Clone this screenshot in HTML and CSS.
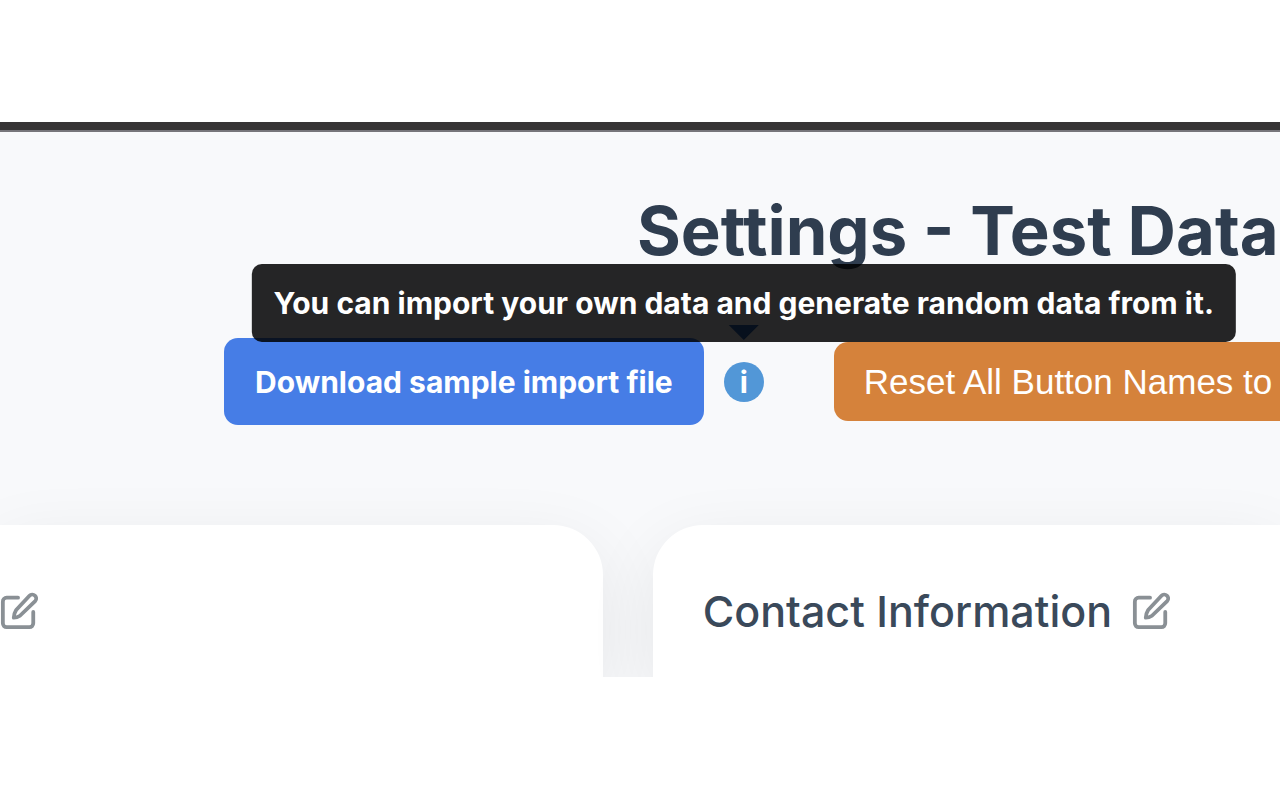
FILE: index.html
```
<!DOCTYPE html>
<html lang="en">
<head>
    <meta charset="UTF-8">
    <meta name="viewport" content="width=device-width, initial-scale=1.0">
    <title>Settings - Test Data</title>
    <link rel="stylesheet" href="styles.css">
</head>
<body>

    <main class="settings">
        <h1 class="title">Settings - Test Data</h1>

        <div class="toolbar">
            <button class="button button-download" type="button">Download sample import file</button>
            <button class="info" type="button" aria-describedby="import-tip">
                i
                <span class="tooltip" id="import-tip" role="tooltip">You can import your own data and generate random data from it.</span>
            </button>
            <button class="button button-reset" type="button">Reset All Button Names to</button>
        </div>

        <div class="cards">
            <section class="card card-left">
                <button class="edit" type="button" aria-label="Edit section name">
                    <svg viewBox="0 0 40 40" aria-hidden="true">
                        <path d="M19 6H7a4 4 0 0 0-4 4v23a4 4 0 0 0 4 4h24a4 4 0 0 0 4-4V21"/>
                        <path d="M31 4a3.800 3.800 0 0 1 6 5.500L21 25q-3 2-6.500 2q0-4 2.500-8z"/>
                    </svg>
                </button>
            </section>
            <section class="card card-right">
                <h2 class="card-title">Contact Information</h2>
                <button class="edit" type="button" aria-label="Edit Contact Information">
                    <svg viewBox="0 0 40 40" aria-hidden="true">
                        <path d="M19 6H7a4 4 0 0 0-4 4v23a4 4 0 0 0 4 4h24a4 4 0 0 0 4-4V21"/>
                        <path d="M31 4a3.800 3.800 0 0 1 6 5.500L21 25q-3 2-6.500 2q0-4 2.500-8z"/>
                    </svg>
                </button>
            </section>
        </div>
    </main>

</body>
</html>
```
FILE: styles.css
```
* {
    box-sizing: border-box;
}

body {
    margin: 0;
    padding: 122px 0;
    background: #fff;
    color: #2f3d4f;
    font-family: Inter, "Liberation Sans", sans-serif;
}

.settings {
    overflow: hidden;
    border-top: 8px solid #363435;
    background: linear-gradient(#77767b 2px, #f8f9fb 2px);
}

.title {
    margin: 0;
    padding: 61px 0 0 637px;
    font-size: 67px;
    font-weight: 700;
    line-height: 80px;
    white-space: nowrap;
}

.toolbar {
    display: flex;
    align-items: center;
    margin: 67px 0 100px 224px;
    white-space: nowrap;
}

.button {
    flex-shrink: 0;
    border: none;
    border-radius: 14px;
    color: #fff;
    cursor: pointer;
}

.button-download {
    padding: 25px 31px 23px;
    background: #467de6;
    font: 700 30px/39px Inter, sans-serif;
}

.button-reset {
    margin-left: 70px;
    padding: 20px 30px;
    background: #d5823b;
    font: 35px/39px "Liberation Sans", sans-serif;
}

.info {
    position: relative;
    flex-shrink: 0;
    width: 40px;
    height: 40px;
    margin-left: 20px;
    padding: 0;
    border: none;
    border-radius: 50%;
    background: #5297d7;
    color: #fff;
    font: 700 30px/40px Inter, sans-serif;
}

.tooltip {
    position: absolute;
    z-index: 1;
    bottom: 60px;
    left: 50%;
    transform: translateX(-50%);
    padding: 20px 22px;
    border-radius: 10px;
    background: rgba(0, 0, 0, 0.85);
    line-height: 38px;
}

.tooltip::after {
    content: "";
    position: absolute;
    bottom: 2px;
    left: 50%;
    margin-left: -15px;
    border: 15px solid transparent;
    border-top-color: #07101d;
    border-bottom: 0;
}

.cards {
    display: grid;
    grid-template-columns: 49fr 51fr;
    gap: 50px;
}

.card {
    display: flex;
    align-items: center;
    padding: 60px 0 40px;
    background: #fff;
    box-shadow: 0 20px 70px rgba(0, 0, 0, 0.08);
}

.card-left {
    border-radius: 0 50px 0 0;
}

.card-right {
    padding-left: 50px;
    border-radius: 50px 0 0 0;
}

.card-title {
    margin: 0 20px 0 0;
    color: #3a495a;
    font-size: 43px;
    font-weight: 500;
    line-height: 52px;
    white-space: nowrap;
}

.edit {
    padding: 0;
    border: none;
    background: none;
    cursor: pointer;
}

.edit svg {
    display: block;
    width: 38px;
    height: 38px;
    fill: none;
    stroke: #8a9095;
    stroke-width: 4;
    stroke-linecap: round;
    stroke-linejoin: round;
}
```
